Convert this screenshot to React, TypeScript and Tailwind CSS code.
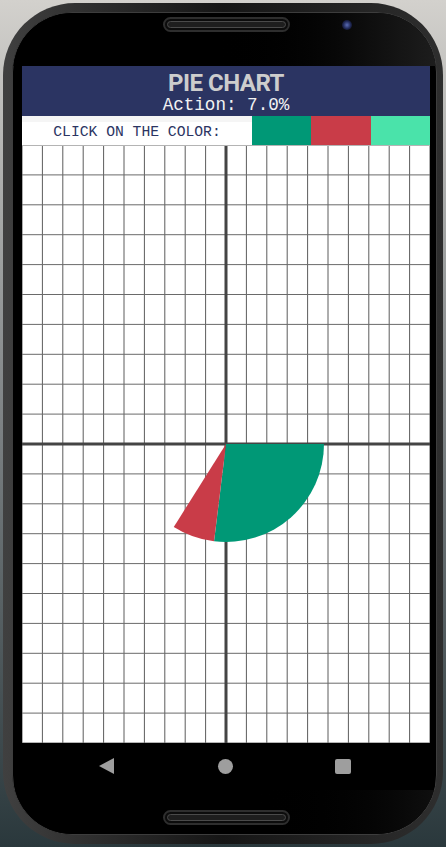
import React from "react";

// grid is 20 x 20 cells over the chart area
const GRID_W = 408;
const GRID_H = 598;
const CELL_W = GRID_W / 20;
const CELL_H = GRID_H / 20;

const CX = GRID_W / 2;
const CY = CELL_H * 10;
const R = 98;

type Slice = { color: string; from: number; to: number };

const slices: Slice[] = [
  { color: "#009876", from: 0, to: 97 },
  { color: "#c93c48", from: 97, to: 122.2 },
];

const arcPath = ({ from, to }: Slice) => {
  const a = (from * Math.PI) / 180;
  const b = (to * Math.PI) / 180;
  const x1 = CX + R * Math.cos(a);
  const y1 = CY + R * Math.sin(a);
  const x2 = CX + R * Math.cos(b);
  const y2 = CY + R * Math.sin(b);
  const large = to - from > 180 ? 1 : 0;
  return `M${CX},${CY} L${x1},${y1} A${R},${R} 0 ${large},1 ${x2},${y2} Z`;
};

const Chart = () => {
  const cols = Array.from({ length: 21 }, (_, i) => i * CELL_W);
  const rows = Array.from({ length: 21 }, (_, i) => i * CELL_H);
  return (
    <svg width={GRID_W} height={GRID_H} className="block">
      <rect width={GRID_W} height={GRID_H} fill="#ffffff" />
      {cols.map((x, i) => (
        <line key={`c${i}`} x1={x} y1={1} x2={x} y2={GRID_H} stroke="#5c5c5c" strokeWidth={1} />
      ))}
      {rows.map((y, i) => (
        <line key={`r${i}`} x1={0} y1={y} x2={GRID_W} y2={y} stroke="#6a6a6a" strokeWidth={1} />
      ))}
      <line x1={CX} y1={1} x2={CX} y2={GRID_H} stroke="#444" strokeWidth={3} />
      <line x1={0} y1={CY} x2={GRID_W} y2={CY} stroke="#444" strokeWidth={3} />
      {slices.map((s, i) => (
        <path key={i} d={arcPath(s)} fill={s.color} />
      ))}
    </svg>
  );
};

const Speaker = () => (
  <div className="w-[127px] h-[15px] rounded-full border-2 border-[#2e2e2e] bg-[#0c0c0c] p-[2px]">
    <div className="h-full rounded-full border border-[#4a4a4a] bg-[#1e1e1e]" />
  </div>
);

export default function App() {
  return (
    <div className="w-[446px] h-[847px] bg-linear-to-b from-[#d3d1cd] via-[#7d8284] to-[#2a383c] p-[3px]">
      <div className="h-full rounded-[72px] bg-linear-to-r from-[#404040] via-[#161616] to-[#2e2e2e] pl-[9px] pr-[6px] py-[9px]">
        <div className="h-full rounded-[60px] border border-[#3d3d3d] bg-black overflow-hidden flex flex-col">
          {/* top bezel */}
          <div className="h-[53px] shrink-0 flex items-start pt-[4px] pl-[150px] bg-linear-to-r from-black from-45% to-[#1d1d1d]">
            <Speaker />
            <div className="ml-[52px] mt-[3px] w-[10px] h-[10px] rounded-full bg-[radial-gradient(circle,#5a6cb5,#1d2550_55%,#070707)]" />
          </div>

          {/* screen */}
          <div className="ml-[9px] w-[408px] h-[677px] shrink-0 flex flex-col bg-white">
            <div className="h-[50px] bg-[#2b3462] flex flex-col items-center pt-[4px]">
              <h1 className="font-['Roboto',sans-serif] font-bold text-[24px] leading-[26px] text-[#cdcdcd] tracking-[-0.5px]">
                PIE CHART
              </h1>
              <p className="font-['Liberation_Mono',monospace] text-[17.6px] leading-[19px] text-[#f2f2f2]">
                Action: 7.0%
              </p>
            </div>
            <div className="h-[29px] flex">
              <div className="w-[230px] flex flex-col">
                <div className="h-[6px] bg-[#f5f5f5]" />
                <p className="flex-1 flex items-center justify-center font-['Liberation_Mono',monospace] text-[14.7px] leading-none text-[#2b3462] pb-[3px]">
                  CLICK ON THE COLOR:
                </p>
              </div>
              <div className="w-[59px] bg-[#009876]" />
              <div className="w-[60px] bg-[#c93c48]" />
              <div className="w-[59px] bg-[#4ae3aa]" />
            </div>
            <Chart />
          </div>

          {/* nav bar */}
          <div className="ml-[9px] w-[408px] h-[47px] shrink-0 flex items-center pl-[77px] pb-[1px]">
            <svg width="15" height="16" viewBox="0 0 15 16">
              <path d="M0 8 L15 0 L15 16 Z" fill="#9e9e9e" />
            </svg>
            <div className="ml-[104px] w-[15px] h-[15px] rounded-full bg-[#9e9e9e]" />
            <div className="ml-[102px] w-[16px] h-[15px] rounded-[2px] bg-[#9e9e9e]" />
          </div>

          {/* bottom bezel */}
          <div className="flex-1 flex items-start pt-[20px] pl-[150px] bg-linear-to-r from-black from-55% to-[#0f0f0f]">
            <Speaker />
          </div>
        </div>
      </div>
    </div>
  );
}
